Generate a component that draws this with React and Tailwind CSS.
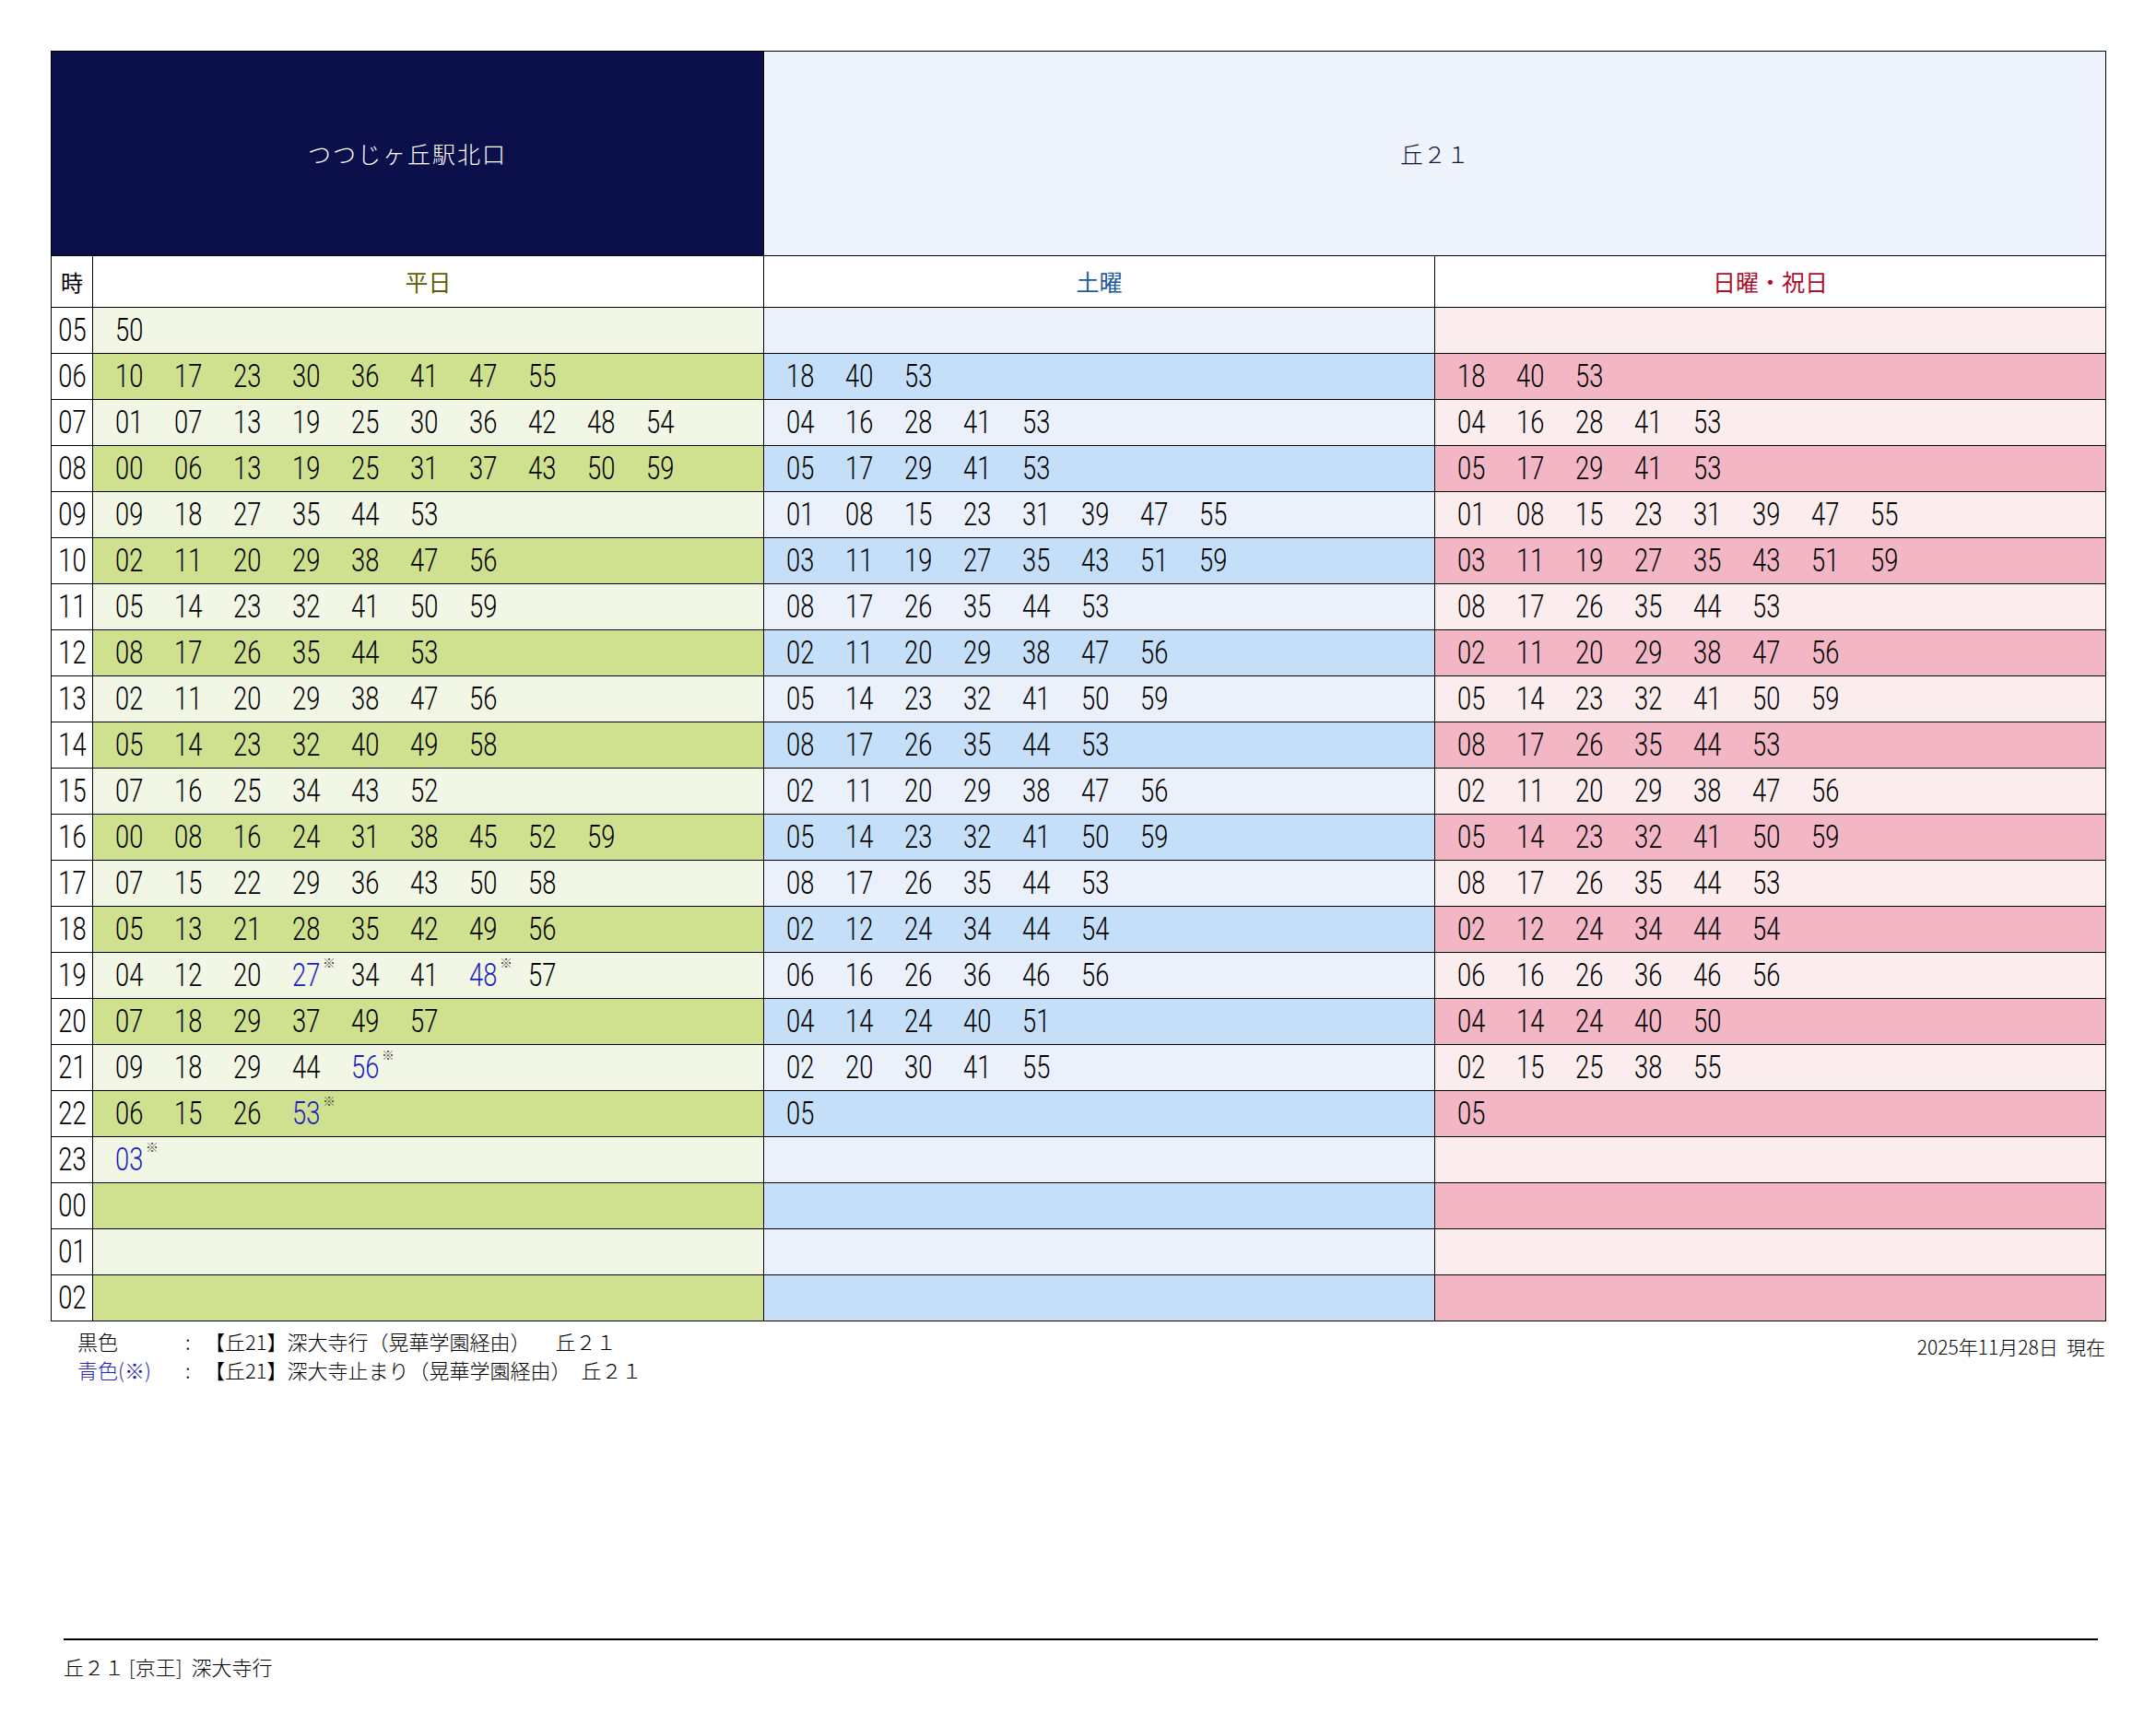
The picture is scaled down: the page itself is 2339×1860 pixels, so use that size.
const HOURS = [
  "05", "06", "07", "08", "09", "10", "11", "12", "13", "14", "15",
  "16", "17", "18", "19", "20", "21", "22", "23", "00", "01", "02",
];

// "*" marks the short runs (深大寺止まり), drawn blue with ※
const WEEKDAY = [
  "50",
  "10 17 23 30 36 41 47 55",
  "01 07 13 19 25 30 36 42 48 54",
  "00 06 13 19 25 31 37 43 50 59",
  "09 18 27 35 44 53",
  "02 11 20 29 38 47 56",
  "05 14 23 32 41 50 59",
  "08 17 26 35 44 53",
  "02 11 20 29 38 47 56",
  "05 14 23 32 40 49 58",
  "07 16 25 34 43 52",
  "00 08 16 24 31 38 45 52 59",
  "07 15 22 29 36 43 50 58",
  "05 13 21 28 35 42 49 56",
  "04 12 20 27* 34 41 48* 57",
  "07 18 29 37 49 57",
  "09 18 29 44 56*",
  "06 15 26 53*",
  "03*",
  "",
  "",
  "",
];

const SATURDAY = [
  "",
  "18 40 53",
  "04 16 28 41 53",
  "05 17 29 41 53",
  "01 08 15 23 31 39 47 55",
  "03 11 19 27 35 43 51 59",
  "08 17 26 35 44 53",
  "02 11 20 29 38 47 56",
  "05 14 23 32 41 50 59",
  "08 17 26 35 44 53",
  "02 11 20 29 38 47 56",
  "05 14 23 32 41 50 59",
  "08 17 26 35 44 53",
  "02 12 24 34 44 54",
  "06 16 26 36 46 56",
  "04 14 24 40 51",
  "02 20 30 41 55",
  "05",
  "",
  "",
  "",
  "",
];

const HOLIDAY = [
  "",
  "18 40 53",
  "04 16 28 41 53",
  "05 17 29 41 53",
  "01 08 15 23 31 39 47 55",
  "03 11 19 27 35 43 51 59",
  "08 17 26 35 44 53",
  "02 11 20 29 38 47 56",
  "05 14 23 32 41 50 59",
  "08 17 26 35 44 53",
  "02 11 20 29 38 47 56",
  "05 14 23 32 41 50 59",
  "08 17 26 35 44 53",
  "02 12 24 34 44 54",
  "06 16 26 36 46 56",
  "04 14 24 40 50",
  "02 15 25 38 55",
  "05",
  "",
  "",
  "",
  "",
];

const COLUMNS = [
  { key: "weekday", data: WEEKDAY, light: "bg-[#f2f7e5]", dark: "bg-[#cfe08f]" },
  { key: "saturday", data: SATURDAY, light: "bg-[#eaf1fb]", dark: "bg-[#c5dff8]" },
  { key: "holiday", data: HOLIDAY, light: "bg-[#fbecee]", dark: "bg-[#f2b6c5]" },
];

function Minute({ value }) {
  const isShort = value.endsWith("*");
  const text = isShort ? value.slice(0, -1) : value;

  return (
    <span className="relative w-[64px] shrink-0 h-[35px]">
      <span
        className={`inline-block origin-left scale-x-[0.78] text-[35px] leading-[35px] font-light ${
          isShort ? "text-[#1c1cc4]" : "text-black"
        }`}
      >
        {text}
      </span>
      {isShort && (
        <span className="absolute left-[33px] top-[-4px] text-[14px] leading-none text-[#444] font-['Noto_Sans_CJK_JP',sans-serif]">
          ※
        </span>
      )}
    </span>
  );
}

function MinuteCell({ value, bg }) {
  const items = value ? value.split(" ") : [];
  return (
    <td className={`border border-black p-0 align-middle ${bg}`}>
      <div className="flex items-center pl-[24px] font-['Roboto',sans-serif]">
        {items.map((m, i) => (
          <Minute key={i} value={m} />
        ))}
      </div>
    </td>
  );
}

export default function App() {
  return (
    <div className="w-[2339px] min-h-[1860px] bg-white text-black font-['Noto_Sans_CJK_JP',sans-serif]">
      <div className="pt-[55px] pl-[55px]">
        <table className="table-fixed border-collapse w-[2229px]">
          <colgroup>
            <col className="w-[45px]" />
            <col className="w-[728px]" />
            <col className="w-[728px]" />
            <col className="w-[728px]" />
          </colgroup>
          <tbody>
            <tr className="h-[222px]">
              <td
                colSpan={2}
                className="border border-black bg-[#0b104a] text-center text-white text-[25px] tracking-[2px] font-light"
              >
                つつじヶ丘駅北口
              </td>
              <td
                colSpan={2}
                className="border border-black bg-[#eef3fc] text-center text-[#14143a] text-[25px] font-light"
              >
                丘２１
              </td>
            </tr>

            <tr className="h-[56px] bg-white">
              <td className="border border-black text-center text-[24px]">時</td>
              <td className="border border-black text-center text-[25px] text-[#5e5e00]">平日</td>
              <td className="border border-black text-center text-[25px] text-[#1f5a9e]">土曜</td>
              <td className="border border-black text-center text-[25px] text-[#ac0f2c]">日曜・祝日</td>
            </tr>

            {HOURS.map((hour, rowIndex) => (
              <tr key={hour} className="h-[50px]">
                <td className="border border-black bg-white text-center p-0 align-middle font-['Roboto',sans-serif]">
                  <span className="inline-block scale-x-[0.78] text-[35px] leading-[35px] font-light">
                    {hour}
                  </span>
                </td>
                {COLUMNS.map((col) => (
                  <MinuteCell
                    key={col.key}
                    value={col.data[rowIndex]}
                    bg={rowIndex % 2 === 0 ? col.light : col.dark}
                  />
                ))}
              </tr>
            ))}
          </tbody>
        </table>

        <div className="w-[2229px] flex justify-between mt-[6px]">
          <div className="pl-[29px] text-[22px] leading-[31px] font-light">
            <div className="grid grid-cols-[117px_21px_auto]">
              <span>黒色</span>
              <span>:</span>
              <span>【丘21】深大寺行（晃華学園経由）&nbsp;　丘２１</span>
            </div>
            <div className="grid grid-cols-[117px_21px_auto]">
              <span className="text-[#2424b4]">青色(※)</span>
              <span>:</span>
              <span>【丘21】深大寺止まり（晃華学園経由）　丘２１</span>
            </div>
          </div>
          <div className="mt-[6px] text-[21px] leading-[31px] font-light">
            2025年11月28日&nbsp;&nbsp;現在
          </div>
        </div>
      </div>

      <div className="ml-[69px] mt-[276px] w-[2207px]">
        <div className="border-t-2 border-black" />
        <div className="mt-[14px] text-[22px] leading-[28px] font-light">
          丘２１ [京王]&nbsp;&nbsp;深大寺行
        </div>
      </div>
    </div>
  );
}
